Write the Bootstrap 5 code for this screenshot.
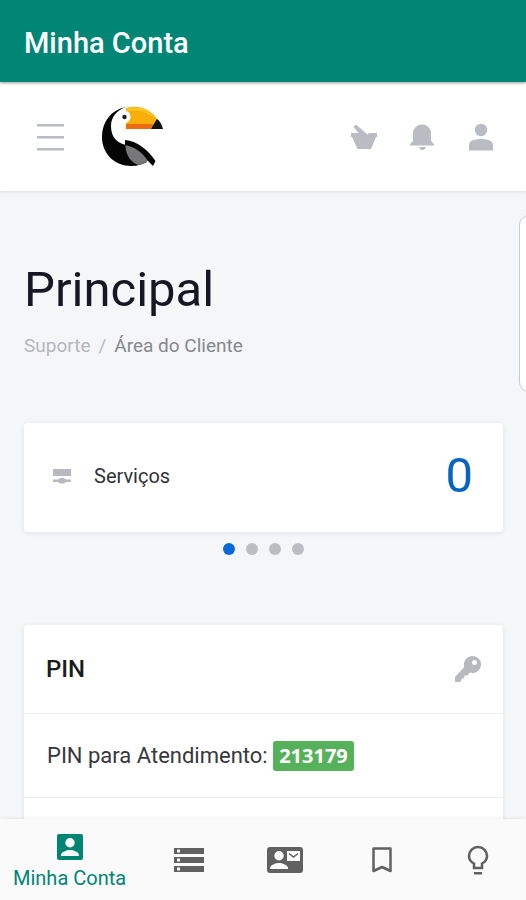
<!DOCTYPE html>
<html lang="pt-BR">
<head>
<meta charset="utf-8">
<meta name="viewport" content="width=device-width, initial-scale=1">
<title>Minha Conta</title>
<link href="https://cdn.jsdelivr.net/npm/bootstrap@5.3.0/dist/css/bootstrap.min.css" rel="stylesheet">
<style>
body { font-family: Roboto, sans-serif; background: #f5f6f8; color: #303238; }
svg { display: block; fill: currentColor; }
.app-bar { background: #018575; padding: 22px 24px 18px; box-shadow: 0 1px 3px rgba(0,0,0,.4); z-index: 3; }
.app-bar h1 { font-size: 29px; line-height: 42px; font-weight: 500; }
.site-bar { padding: 24px 30px 24px 36px; box-shadow: 0 1px 3px rgba(40,50,80,.12); z-index: 2; }
.site-bar .btn { color: #b9bcc3; }
.menu-btn { margin-right: 38px; }
.tools { gap: 30px; }
.view { min-height: 0; }
.side-tab { position: absolute; top: 24px; right: -14px; width: 21px; height: 177px; background: #fff; border: 1px solid #c8cacc; border-radius: 10px; }
.page-body { padding: 68px 23px 0 24px; }
.page-title { font-size: 49px; line-height: 62px; font-weight: 400; color: #141824; }
.crumbs { font-size: 19px; line-height: 28px; margin: 11px 0 63px; --bs-breadcrumb-item-padding-x: 8px; --bs-breadcrumb-divider-color: #b8bbc0; }
.crumbs a { color: #b4b7bc; }
.crumbs .active { color: #85888e; }
.panel { border: 0; border-radius: 4px; box-shadow: 0 1px 5px rgba(40,50,80,.1); }
.service { padding: 16px 30px 20px 28px; min-height: 109px; color: #303238; }
.service-name { font-size: 20px; line-height: 28px; margin-left: 22px; }
.service-count { font-size: 49px; line-height: 60px; color: #0763c4; }
.dots { gap: 11px; margin: 11px 0 70px; }
.dots button { width: 12px; height: 12px; background: #bbbdc2; }
.dots button.active { background: #0969d8; }
.panel-head { padding: 28px 22px; min-height: 88px; background: #fff; border-color: #ecedef; }
.panel-head h2 { font-size: 24px; line-height: 32px; font-weight: 500; color: #1b1c20; }
.panel .list-group-item { padding: 24px 23px; font-size: 22px; line-height: 35px; color: #36383d; border-color: #ecedef; }
.pin-code { font: 700 20px/30px "Noto Sans", sans-serif; padding: 0 6px; border-radius: 3px; background: #56b25a; }
.tabs { background: #fafafa; height: 81px; box-shadow: 0 -1px 3px rgba(0,0,0,.07); z-index: 3; }
.tabs a { color: #616161; flex: 1 1 0; }
.tabs a.active { color: #018575; flex: 0 0 auto; padding: 4px 15px 0 13px; font-size: 20px; line-height: 26px; }
</style>
<script src="https://cdn.jsdelivr.net/npm/bootstrap@5.3.0/dist/js/bootstrap.bundle.min.js" defer></script>
</head>
<body class="vh-100 d-flex flex-column overflow-hidden">
<header class="app-bar position-relative text-white">
  <h1 class="m-0">Minha Conta</h1>
</header>
<nav class="site-bar position-relative bg-white d-flex align-items-center" aria-label="Site">
  <button class="btn border-0 p-0 menu-btn" type="button" aria-label="Menu">
    <svg width="28" height="30" viewBox="0 0 28 30"><path d="M1 2h27v2.500H1zM1 14h27v2.500H1zM1 26h27v2.500H1z"/></svg>
  </button>
  <a href="#" aria-label="Início">
    <svg width="61" height="61" viewBox="0 0 61 61">
      <path d="M24 1C8 4 0 17 0 31c0 17 13 29 29 29 7 0 12-2 16-4L24 36v3C14 37 9 30 9 20 9 11 15 4 24 1z" fill="#050505"/>
      <path d="M23.500 37v3c0 9 6 17 13 19 4-1 7-2 10-5C40 46 33 41 23.500 37z" fill="#77777a"/>
      <path d="M23 34C36 35 47 45 53.500 55L51 60l-5-5C40 46 33 41 23 39z" fill="#050505"/>
      <path d="M24 2C38-2 54 4 60 23H24v-6c6-2 6-11 0-12z" fill="#f8ad0b"/>
      <path d="M24 3C38-1 49 4 54 14 47 6 37 3 25 5z" fill="#fcc720"/>
      <path d="M24 18h27l-2 5H24z" fill="#ee6b12"/>
      <path d="M55 13c3 2 5 6 6 10H49c2-4 4-7 6-10z" fill="#111"/>
      <circle cx="22.500" cy="11" r="2.200" fill="#15202a"/>
    </svg>
  </a>
  <div class="tools d-flex align-items-center ms-auto">
    <button class="btn border-0 p-0" type="button" aria-label="Carrinho">
      <svg width="28" height="28" viewBox="0 0 28 28"><path d="M1 10h7.500L3.500 4 6 1.500l11.500 10L19 10h8v4h-1l-5 12H7.500L2 14H1z"/></svg>
    </button>
    <button class="btn border-0 p-0" type="button" aria-label="Notificações">
      <svg width="28" height="28" viewBox="0 0 28 28"><path d="M5 18V10a9 8.500 0 0 1 18 0v8l3 3v1.500H2V21zM11 24h7c-1 4-6 4-7 0z"/></svg>
    </button>
    <button class="btn border-0 p-0" type="button" aria-label="Perfil">
      <svg width="30" height="28" viewBox="0 0 30 28"><circle cx="15" cy="7" r="6.200"/><path d="M3 27.500V22c0-4 5-6 12-6s12 2 12 6v5.500z"/></svg>
    </button>
  </div>
</nav>
<main class="view position-relative flex-grow-1 overflow-hidden">
  <div class="side-tab"></div>
  <div class="page-body">
    <h2 class="page-title m-0">Principal</h2>
    <nav aria-label="breadcrumb">
      <ol class="breadcrumb crumbs">
        <li class="breadcrumb-item"><a class="text-decoration-none" href="#">Suporte</a></li>
        <li class="breadcrumb-item active" aria-current="page">Área do Cliente</li>
      </ol>
    </nav>
    <a href="#" class="card panel service flex-row align-items-center text-decoration-none">
      <svg width="20" height="16" viewBox="0 0 20 16" color="#b7b9bf"><path d="M1 1h18v7H1zM1 11.500h5l2-1.500h4l2 1.500h5v2.500h-5L12 15.500H8L6 14H1z"/></svg>
      <span class="service-name">Serviços</span>
      <span class="service-count ms-auto">0</span>
    </a>
    <div class="dots d-flex justify-content-center">
      <button class="btn border-0 p-0 rounded-circle active" type="button" aria-label="Cartão 1"></button>
      <button class="btn border-0 p-0 rounded-circle" type="button" aria-label="Cartão 2"></button>
      <button class="btn border-0 p-0 rounded-circle" type="button" aria-label="Cartão 3"></button>
      <button class="btn border-0 p-0 rounded-circle" type="button" aria-label="Cartão 4"></button>
    </div>
    <section class="card panel">
      <div class="card-header panel-head d-flex align-items-center justify-content-between">
        <h2 class="m-0">PIN</h2>
        <svg width="26" height="26" viewBox="0 0 26 26" color="#b7b9bf"><path fill-rule="evenodd" d="M17.500 0a8.500 8.500 0 1 1-2.500 16.600L12 19.500H9.500L9 22.500H7L5.500 26H0v-5L9.300 11A8.500 8.500 0 0 1 17.500 0zM19.500 4a2.500 2.500 0 1 0 0 5 2.500 2.500 0 0 0 0-5z"/></svg>
      </div>
      <ul class="list-group list-group-flush">
        <li class="list-group-item">PIN para Atendimento: <span class="badge pin-code">213179</span></li>
        <li class="list-group-item">&nbsp;</li>
      </ul>
    </section>
  </div>
</main>
<nav class="tabs position-relative d-flex flex-shrink-0" aria-label="Principal">
  <a href="#" class="active d-flex flex-column align-items-center justify-content-center text-decoration-none" aria-current="page">
    <svg class="mb-1" width="28" height="28" viewBox="0 0 28 28"><path fill-rule="evenodd" d="M3 1h22a2 2 0 0 1 2 2v22a2 2 0 0 1-2 2H3a2 2 0 0 1-2-2V3a2 2 0 0 1 2-2zm11 4a4.700 4.700 0 1 0 0 9.400A4.700 4.700 0 0 0 14 5zM5 23h18v-1c0-3-6-5-9-5s-9 2-9 5z"/></svg>
    Minha Conta
  </a>
  <a href="#" class="d-flex align-items-center justify-content-center" aria-label="Serviços">
    <svg width="30" height="26" viewBox="0 0 30 26"><path fill-rule="evenodd" d="M0 1h30v6H0zM3 2.500v3h3v-3zM0 10h30v6H0zM3 11.500v3h3v-3zM0 19h30v6H0zM3 20.500v3h3v-3z"/></svg>
  </a>
  <a href="#" class="d-flex align-items-center justify-content-center" aria-label="Contato">
    <svg width="36" height="28" viewBox="0 0 36 28"><path fill-rule="evenodd" d="M3 1h30a3 3 0 0 1 3 3v20a3 3 0 0 1-3 3H3a3 3 0 0 1-3-3V4a3 3 0 0 1 3-3zM12 5a4.700 4.700 0 1 0 0 9.400A4.700 4.700 0 0 0 12 5zM3 23h18v-1c0-3-6-5-9-5s-9 2-9 5zM20 5v10h13V5z"/><path d="M22 7.500l4.500 3.500L31 7.500" fill="none" stroke="currentColor" stroke-width="1.500"/></svg>
  </a>
  <a href="#" class="d-flex align-items-center justify-content-center" aria-label="Favoritos">
    <svg width="22" height="28" viewBox="0 0 22 28"><path d="M2.500 2.500h17v22.500L11 21l-8.500 4z" fill="none" stroke="currentColor" stroke-width="2.500" stroke-linejoin="round"/></svg>
  </a>
  <a href="#" class="d-flex align-items-center justify-content-center" aria-label="Dicas">
    <svg width="22" height="30" viewBox="0 0 22 30"><path d="M7 23v-4.500C4 17 2 14 2 11a9 9 0 0 1 18 0c0 3-2 6-5 7.500V23z" fill="none" stroke="currentColor" stroke-width="2.500"/><path d="M7 27h8v2.500H7z"/></svg>
  </a>
</nav>
</body>
</html>
